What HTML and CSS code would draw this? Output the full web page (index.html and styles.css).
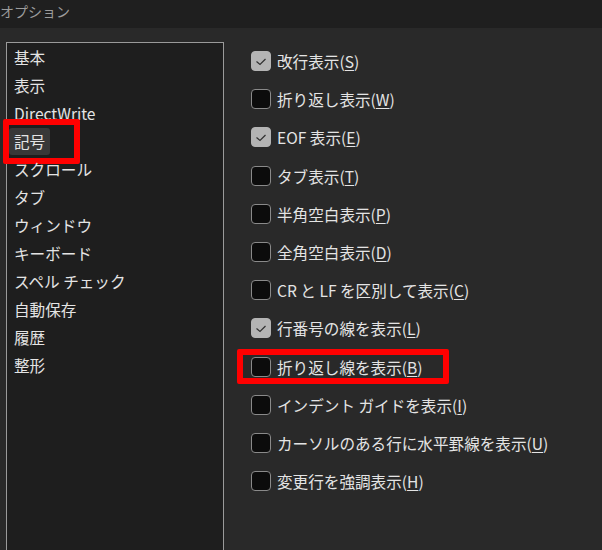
FILE: index.html
```html
<!DOCTYPE html>
<html lang="ja">
<head>
<meta charset="UTF-8">
<title>オプション</title>
<link rel="stylesheet" href="styles.css">
</head>
<body>

<div class="titlebar">オプション</div>

<div class="main">
    <ul class="category-list">
        <li><span class="item">基本</span></li>
        <li><span class="item">表示</span></li>
        <li><span class="item">DirectWrite</span></li>
        <li><span class="item selected marked">記号</span></li>
        <li><span class="item">スクロール</span></li>
        <li><span class="item">タブ</span></li>
        <li><span class="item">ウィンドウ</span></li>
        <li><span class="item">キーボード</span></li>
        <li><span class="item">スペル チェック</span></li>
        <li><span class="item">自動保存</span></li>
        <li><span class="item">履歴</span></li>
        <li><span class="item">整形</span></li>
    </ul>

    <div class="options">
        <label class="option"><span class="check checked"></span>改行表示(<u>S</u>)</label>
        <label class="option"><span class="check"></span>折り返し表示(<u>W</u>)</label>
        <label class="option"><span class="check checked"></span>EOF 表示(<u>E</u>)</label>
        <label class="option"><span class="check"></span>タブ表示(<u>T</u>)</label>
        <label class="option"><span class="check"></span>半角空白表示(<u>P</u>)</label>
        <label class="option"><span class="check"></span>全角空白表示(<u>D</u>)</label>
        <label class="option"><span class="check"></span>CR と LF を区別して表示(<u>C</u>)</label>
        <label class="option"><span class="check checked"></span>行番号の線を表示(<u>L</u>)</label>
        <label class="option marked"><span class="check"></span>折り返し線を表示(<u>B</u>)</label>
        <label class="option"><span class="check"></span>インデント ガイドを表示(<u>I</u>)</label>
        <label class="option"><span class="check"></span>カーソルのある行に水平罫線を表示(<u>U</u>)</label>
        <label class="option"><span class="check"></span>変更行を強調表示(<u>H</u>)</label>
    </div>
</div>

</body>
</html>
```

FILE: styles.css
```css
html, body {
    margin: 0;
    height: 100%;
    overflow: hidden;
}

body {
    background-color: #292929;
    color: #e4e4e4;
    font-family: "Noto Sans CJK JP", "Noto Sans", sans-serif;
    font-size: 15.6px;
}

.titlebar {
    height: 28px;
    line-height: 22px;
    background-color: #1f1f1f;
    color: #9c9c9c;
    font-size: 14px;
}

.main {
    display: flex;
    padding-top: 14px;
}

/* 左のカテゴリ一覧 */
.category-list {
    list-style: none;
    margin: 0 0 0 6px;
    padding: 1px 0 0 0;
    width: 216px;
    height: 520px;
    border: 1px solid #9a9a9a;
    background-color: #1e1e1e;
}

.category-list li {
    height: 28px;
}

.item {
    position: relative;
    display: inline-block;
    height: 27px;
    line-height: 27px;
    margin-left: 2px;
    padding: 0 5px;
    border-radius: 3px;
}

.item.selected {
    background-color: #383838;
}

/* 赤枠 (注釈) */
.marked::before {
    content: "";
    position: absolute;
    border: 6px solid #ff0000;
    border-radius: 2px;
}

.item.marked::before {
    left: -6px;
    top: -9px;
    width: 65px;
    height: 33px;
}

/* 右のチェックボックス */
.options {
    display: flex;
    flex-direction: column;
    margin-left: 27px;
}

.option {
    position: relative;
    display: flex;
    align-items: center;
    height: 38.2px;
    white-space: nowrap;
}

.option u {
    text-underline-offset: 2px;
}

.option.marked::before {
    left: -14px;
    top: 1px;
    width: 200px;
    height: 23px;
}

.check {
    box-sizing: border-box;
    width: 20px;
    height: 20px;
    margin-right: 6px;
    border: 1px solid #8a8a8a;
    border-radius: 4px;
    background-color: #0c0c0c;
    flex-shrink: 0;
}

.check.checked {
    border-color: #b4b4b4;
    background-color: #b4b4b4;
    background-image: url("data:image/svg+xml;utf8,<svg xmlns='http://www.w3.org/2000/svg' width='18' height='18' viewBox='1 1 18 18'><path d='M5.5 10.5 L9 13.5 L14.5 8' fill='none' stroke='%23303030' stroke-width='1.2'/></svg>");
    background-repeat: no-repeat;
    background-position: center;
}
```
